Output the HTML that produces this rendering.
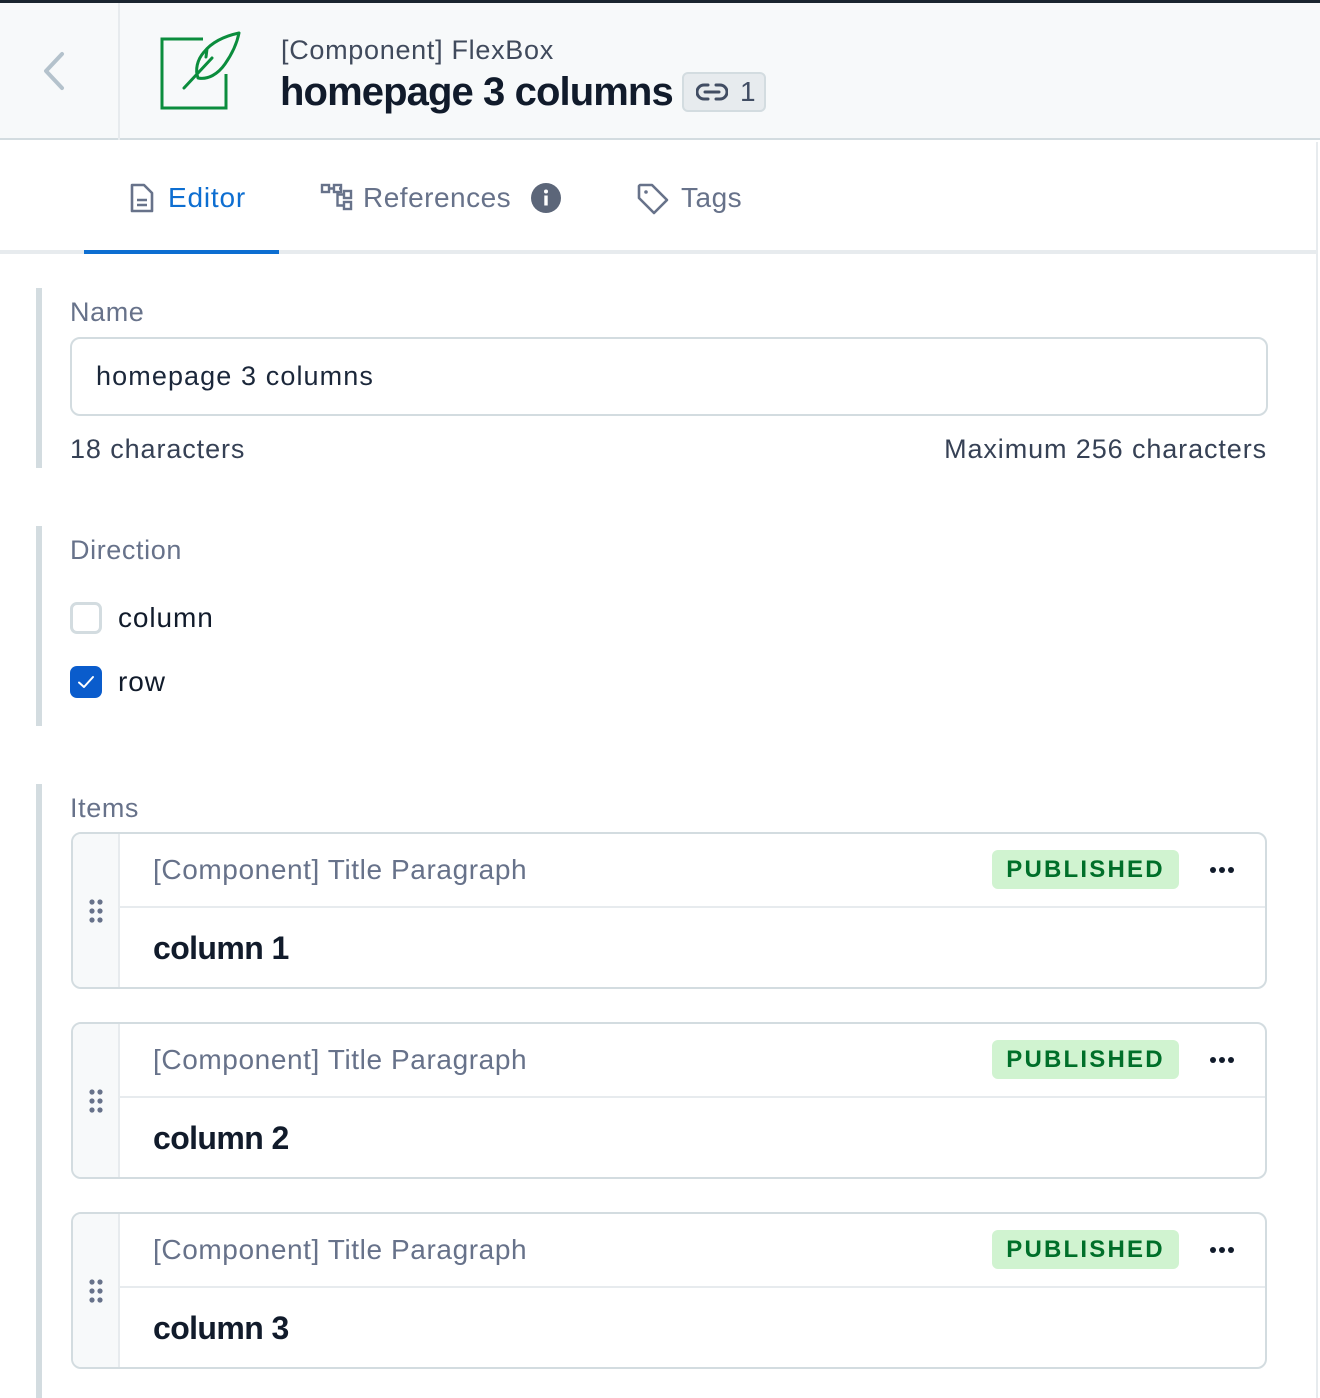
<!DOCTYPE html>
<html><head><meta charset="utf-8"><style>
*{box-sizing:border-box;margin:0;padding:0}
body{width:1320px;height:1398px;position:relative;background:#fff;font-family:"Liberation Sans",Arial,sans-serif;overflow:hidden;color:#1b273a}
.a{position:absolute;white-space:nowrap}
.ls{letter-spacing:0.9px}
.lbl{color:#67728a;font-size:27px;letter-spacing:0.6px}
.card{position:absolute;left:71px;width:1196px;height:157px;border:2px solid #d3dce0;border-radius:10px;overflow:hidden;background:#fff}
.card .h{position:absolute;left:0;top:0;width:47px;height:100%;background:#f7f9fa;border-right:2px solid #e7ebee}
.card .sep{position:absolute;left:47px;right:0;top:72px;height:2px;background:#e7ebee}
.card .t{position:absolute;left:80px;top:20px;font-size:28px;color:#67728a;letter-spacing:0.6px}
.card .c{position:absolute;left:80px;top:96px;font-size:32px;font-weight:bold;color:#111b2b;letter-spacing:-0.6px}
.card .p{position:absolute;left:919px;top:16px;width:187px;height:39px;background:#d0f3d0;border-radius:6px;color:#006f2a;font-weight:bold;font-size:24px;letter-spacing:2.2px;text-align:center;line-height:39px}
.card .d{position:absolute;left:1136px;top:32px}
.card .g{position:absolute;left:15px;top:64px}
</style></head><body>
<div class="a" style="left:0;top:0;width:1320px;height:3px;background:#1a2530"></div>
<div class="a" style="left:0;top:3px;width:1320px;height:137px;background:#f7f9fa;border-bottom:2px solid #d3dce0"></div>
<div class="a" style="left:118px;top:3px;width:2px;height:137px;background:#e7ebee"></div>
<svg class="a" style="left:38px;top:50px" width="30" height="42" viewBox="0 0 30 42"><path d="M24 4 L8 21 L24 38" fill="none" stroke="#b4c2cc" stroke-width="4" stroke-linecap="round" stroke-linejoin="round"/></svg>
<svg class="a" style="left:155px;top:28px" width="92" height="86" viewBox="155 28 92 86"><path d="M203 39 H162 V108 H226 V74" fill="none" stroke="#0b8d3d" stroke-width="3"/><path d="M184 88 L212 58 M239 33 C225 36 212 42 204 52 C197 60 195 70 198 78 C208 80 218 74 225 64 C232 54 237 43 239 33 Z M207 49 L206 57" fill="none" stroke="#0b8d3d" stroke-width="3" stroke-linejoin="round" stroke-linecap="round"/></svg>
<div class="a" style="left:281px;top:35px;font-size:27px;color:#404a5c;letter-spacing:0.7px">[Component] FlexBox</div>
<div class="a" style="left:280px;top:70px;font-size:40px;font-weight:bold;color:#111b2b;letter-spacing:-0.9px">homepage 3 columns</div>
<div class="a" style="left:682px;top:72px;width:84px;height:40px;background:#e7ebee;border:2px solid #d3dce0;border-radius:6px"></div>
<svg class="a" style="left:696px;top:82px" width="32" height="20" viewBox="0 0 32 20"><path d="M12 3 H8 a7 7 0 0 0 0 14 H12 M20 3 H24 a7 7 0 0 1 0 14 H20 M9 10 H23" fill="none" stroke="#414d63" stroke-width="3" stroke-linecap="round"/></svg>
<div class="a" style="left:740px;top:76px;font-size:28px;color:#414d63">1</div>
<div class="a" style="left:1316px;top:142px;width:2px;height:1256px;background:#e7ebee"></div>
<div class="a" style="left:0;top:250px;width:1316px;height:4px;background:#e7ebee"></div>
<div class="a" style="left:84px;top:250px;width:195px;height:4px;background:#0d6ed1"></div>
<svg class="a" style="left:128px;top:182px" width="28" height="32" viewBox="0 0 28 32"><path d="M4 3 H16 L24 11 V29 H4 Z M9 18 H19 M9 23 H19" fill="none" stroke="#67728a" stroke-width="2.6" stroke-linejoin="round"/></svg>
<div class="a" style="left:168px;top:182px;font-size:28px;color:#0d6ed1;letter-spacing:0.8px">Editor</div>
<svg class="a" style="left:320px;top:183px" width="34" height="28" viewBox="0 0 34 28"><g fill="none" stroke="#67728a" stroke-width="2.4"><rect x="2" y="2" width="7" height="7"/><rect x="14" y="2" width="7" height="7"/><rect x="24" y="8" width="7" height="7"/><rect x="24" y="19" width="7" height="7"/><path d="M9 5.5 H14 M21 5.5 H19 M17.5 9 V22.5 H24 M17.5 11.5 H24"/></g></svg>
<div class="a" style="left:363px;top:182px;font-size:28px;color:#67728a;letter-spacing:0.5px">References</div>
<svg class="a" style="left:530px;top:182px" width="32" height="32" viewBox="0 0 32 32"><circle cx="16" cy="16" r="15" fill="#5c6679"/><circle cx="16" cy="9.5" r="2" fill="#fff"/><rect x="14.3" y="13.5" width="3.4" height="10" fill="#fff"/></svg>
<svg class="a" style="left:636px;top:182px" width="34" height="34" viewBox="0 0 34 34"><path d="M3 4 V16 L18 31 L31 18 L16 3 H4 Z" fill="none" stroke="#67728a" stroke-width="2.6" stroke-linejoin="round"/><circle cx="10" cy="10" r="1.8" fill="#67728a"/></svg>
<div class="a" style="left:681px;top:182px;font-size:28px;color:#67728a;letter-spacing:0.5px">Tags</div>

<div class="a" style="left:36px;top:288px;width:6px;height:180px;background:#d3dce0"></div>
<div class="a lbl" style="left:70px;top:297px">Name</div>
<div class="a" style="left:70px;top:337px;width:1198px;height:79px;border:2px solid #d3dce0;border-radius:10px"></div>
<div class="a" style="left:96px;top:361px;font-size:27px;color:#1b273a;letter-spacing:1.1px">homepage 3 columns</div>
<div class="a ls" style="left:70px;top:434px;font-size:27px;color:#364155">18 characters</div>
<div class="a ls" style="right:53px;top:434px;font-size:27px;color:#364155">Maximum 256 characters</div>

<div class="a" style="left:36px;top:526px;width:6px;height:200px;background:#d3dce0"></div>
<div class="a lbl" style="left:70px;top:535px">Direction</div>
<div class="a" style="left:70px;top:602px;width:32px;height:32px;border:3px solid #d3dce0;border-radius:7px;background:#fff"></div>
<div class="a" style="left:118px;top:602px;font-size:28px;color:#111b2b;letter-spacing:0.9px">column</div>
<div class="a" style="left:70px;top:666px;width:32px;height:32px;border-radius:7px;background:#0a5ccc"></div>
<svg class="a" style="left:70px;top:666px" width="32" height="32" viewBox="0 0 32 32"><path d="M9 16.5 L14 21 L23 11" fill="none" stroke="#fff" stroke-width="2" stroke-linecap="round" stroke-linejoin="round"/></svg>
<div class="a" style="left:118px;top:666px;font-size:28px;color:#111b2b;letter-spacing:0.9px">row</div>

<div class="a" style="left:36px;top:784px;width:6px;height:614px;background:#d3dce0"></div>
<div class="a lbl" style="left:70px;top:793px">Items</div>

<div class="card" style="top:832px"><div class="h"></div><div class="sep"></div><div class="t">[Component] Title Paragraph</div><div class="c">column 1</div><div class="p">PUBLISHED</div>
<svg class="d" width="26" height="8"><circle cx="4" cy="4" r="3" fill="#111b2b"/><circle cx="13" cy="4" r="3" fill="#111b2b"/><circle cx="22" cy="4" r="3" fill="#111b2b"/></svg>
<svg class="g" width="16" height="26"><g fill="#67728a"><circle cx="4" cy="4" r="2.6"/><circle cx="12" cy="4" r="2.6"/><circle cx="4" cy="13" r="2.6"/><circle cx="12" cy="13" r="2.6"/><circle cx="4" cy="22" r="2.6"/><circle cx="12" cy="22" r="2.6"/></g></svg></div>

<div class="card" style="top:1022px"><div class="h"></div><div class="sep"></div><div class="t">[Component] Title Paragraph</div><div class="c">column 2</div><div class="p">PUBLISHED</div>
<svg class="d" width="26" height="8"><circle cx="4" cy="4" r="3" fill="#111b2b"/><circle cx="13" cy="4" r="3" fill="#111b2b"/><circle cx="22" cy="4" r="3" fill="#111b2b"/></svg>
<svg class="g" width="16" height="26"><g fill="#67728a"><circle cx="4" cy="4" r="2.6"/><circle cx="12" cy="4" r="2.6"/><circle cx="4" cy="13" r="2.6"/><circle cx="12" cy="13" r="2.6"/><circle cx="4" cy="22" r="2.6"/><circle cx="12" cy="22" r="2.6"/></g></svg></div>

<div class="card" style="top:1212px"><div class="h"></div><div class="sep"></div><div class="t">[Component] Title Paragraph</div><div class="c">column 3</div><div class="p">PUBLISHED</div>
<svg class="d" width="26" height="8"><circle cx="4" cy="4" r="3" fill="#111b2b"/><circle cx="13" cy="4" r="3" fill="#111b2b"/><circle cx="22" cy="4" r="3" fill="#111b2b"/></svg>
<svg class="g" width="16" height="26"><g fill="#67728a"><circle cx="4" cy="4" r="2.6"/><circle cx="12" cy="4" r="2.6"/><circle cx="4" cy="13" r="2.6"/><circle cx="12" cy="13" r="2.6"/><circle cx="4" cy="22" r="2.6"/><circle cx="12" cy="22" r="2.6"/></g></svg></div>
</body></html>
